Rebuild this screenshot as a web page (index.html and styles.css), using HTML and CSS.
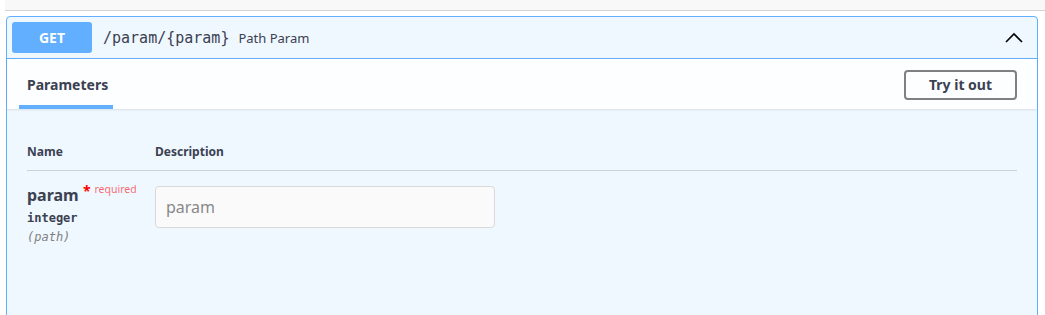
FILE: index.html
```html
<!DOCTYPE html>
<html lang="en">
<head>
    <meta charset="UTF-8">
    <meta name="viewport" content="width=device-width, initial-scale=1.0">
    <title>Path Param</title>
    <link rel="stylesheet" href="styles.css">
</head>
<body>
    <div class="top-strip"></div>
    <div class="opblock">
        <div class="summary">
            <span class="method">GET</span>
            <span class="path">/param/{param}</span>
            <span class="summary-desc">Path Param</span>
            <svg class="arrow" width="20" height="20" viewBox="0 0 20 20">
                <path d="M2 14 L10 6 L18 14" fill="none" stroke="#000" stroke-width="1.6"/>
            </svg>
        </div>
        <div class="section-header">
            <div class="tab">Parameters</div>
            <button class="try-out">Try it out</button>
        </div>
        <div class="params">
            <div class="params-head">
                <div class="col-name">Name</div>
                <div class="col-desc">Description</div>
            </div>
            <div class="param-row">
                <div class="col-name">
                    <div class="param-name">param <span class="star">*</span><span class="required">required</span></div>
                    <div class="param-type">integer</div>
                    <div class="param-in">(path)</div>
                </div>
                <div class="col-desc">
                    <input type="text" class="param-input" placeholder="param">
                </div>
            </div>
        </div>
    </div>
</body>
</html>
```

FILE: styles.css
```css
body {
    margin: 0;
    padding: 0;
    background: #fff;
    font-family: 'Noto Sans', 'Open Sans', sans-serif;
    color: #3b4151;
    overflow: hidden;
}
.top-strip {
    height: 10px;
    margin-left: 5px;
    background: #f8f8f8;
    border-bottom: 1px solid #d3d3d3;
}
.opblock {
    margin: 5px 7px 0 6px;
    border: 1px solid #61affe;
    border-radius: 4px;
    background: #eff7ff;
    height: 310px;
}
.summary {
    display: flex;
    align-items: center;
    padding: 5px;
    border-bottom: 1px solid #61affe;
}
.method {
    width: 80px;
    height: 31px;
    line-height: 31px;
    text-align: center;
    background: #61affe;
    color: #fff;
    font-weight: 700;
    font-size: 14px;
    border-radius: 3px;
}
.path {
    font-family: 'DejaVu Sans Mono', monospace;
    font-size: 15px;
    color: #3b4151;
    margin-left: 11px;
}
.summary-desc {
    font-size: 13px;
    margin-left: 9px;
    color: #3b4151;
}
.arrow {
    margin-left: auto;
    margin-right: 8px;
}
.section-header {
    display: flex;
    align-items: center;
    justify-content: space-between;
    height: 50px;
    padding: 0 20px 0 12px;
    background: rgba(255, 255, 255, 0.8);
    box-shadow: 0 1px 2px rgba(0, 0, 0, 0.1);
}
.tab {
    align-self: flex-end;
    font-size: 14px;
    font-weight: 700;
    padding: 0 8px 10px;
    width: 78px;
    border-bottom: 4px solid #61affe;
    line-height: 20px;
}
.try-out {
    width: 113px;
    height: 30px;
    border: 2px solid #808080;
    border-radius: 4px;
    background: transparent;
    font-family: 'Noto Sans', 'Open Sans', sans-serif;
    font-size: 14px;
    font-weight: 700;
    color: #3b4151;
    margin-top: 1px;
}
.params {
    padding: 34px 20px 0;
}
.params-head {
    display: flex;
    font-size: 12px;
    font-weight: 700;
    padding-bottom: 10px;
    border-bottom: 1px solid rgba(59, 65, 81, 0.2);
}
.col-name {
    width: 128px;
}
.param-row {
    display: flex;
    padding-top: 14px;
}
.param-name {
    font-size: 16px;
    font-weight: 700;
    line-height: 20px;
}
.star {
    color: red;
    font-size: 14px;
    position: relative;
    top: -5px;
}
.required {
    color: rgba(255, 0, 0, 0.6);
    font-size: 10.5px;
    font-weight: 400;
    position: relative;
    top: -8px;
    margin-left: 4px;
}
.param-type {
    font-family: 'DejaVu Sans Mono', monospace;
    font-size: 12px;
    font-weight: 600;
    margin-top: 4px;
}
.param-in {
    font-family: 'DejaVu Sans Mono', monospace;
    font-size: 12px;
    font-style: italic;
    color: #808080;
    margin-top: 5px;
}
.param-input {
    box-sizing: border-box;
    width: 340px;
    height: 42px;
    margin-top: 1px;
    padding: 8px 10px;
    border: 1px solid #d9d9d9;
    border-radius: 4px;
    background: #fafafa;
    font-family: 'Noto Sans', 'Open Sans', sans-serif;
    font-size: 16px;
    color: #3b4151;
}
.param-input::placeholder {
    color: #888;
}
```
